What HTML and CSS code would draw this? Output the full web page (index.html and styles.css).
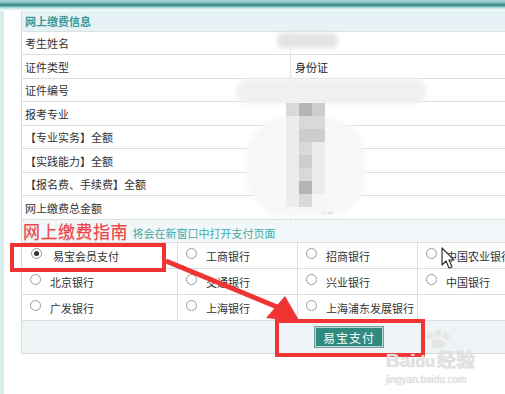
FILE: index.html
```html
<!doctype html>
<html lang="zh-CN">
  <head>
    <meta charset="UTF-8" />
    <title>网上缴费</title>
    <link rel="stylesheet" href="styles.css">
  </head>
  <body>
    <div class="topbar"></div>

    <div class="page">
      <div class="panel">
        <div class="panel-title">网上缴费信息</div>

        <div class="info">
          <div class="row"><span class="label">考生姓名</span><span class="value"></span></div>
          <div class="row"><span class="label">证件类型</span><span class="value">身份证</span></div>
          <div class="row"><span class="label">证件编号</span><span class="value"></span></div>
          <div class="row"><span class="label">报考专业</span><span class="value"></span></div>
          <div class="row"><span class="label">【专业实务】全额</span><span class="value"></span></div>
          <div class="row"><span class="label">【实践能力】全额</span><span class="value"></span></div>
          <div class="row"><span class="label">【报名费、手续费】全额</span><span class="value"></span></div>
          <div class="row"><span class="label">网上缴费总金额</span><span class="value yuan">元</span></div>
        </div>

        <div class="guide">
          <span class="guide-title">网上缴费指南</span>
          <span class="guide-note">将会在新窗口中打开支付页面</span>
        </div>

        <div class="banks">
          <label class="bank"><span class="radio checked"></span>易宝会员支付</label>
          <label class="bank"><span class="radio"></span>工商银行</label>
          <label class="bank"><span class="radio"></span>招商银行</label>
          <label class="bank"><span class="radio"></span>中国农业银行</label>
          <label class="bank"><span class="radio"></span>北京银行</label>
          <label class="bank"><span class="radio"></span>交通银行</label>
          <label class="bank"><span class="radio"></span>兴业银行</label>
          <label class="bank"><span class="radio"></span>中国银行</label>
          <label class="bank"><span class="radio"></span>广发银行</label>
          <label class="bank"><span class="radio"></span>上海银行</label>
          <label class="bank"><span class="radio"></span>上海浦东发展银行</label>
          <label class="bank empty"></label>
        </div>

        <div class="actions">
          <button class="pay-btn">易宝支付</button>
        </div>
      </div>
    </div>

    <!-- privacy blur over personal data -->
    <div class="blur blur-name"></div>
    <div class="blur blur-id"></div>
    <div class="blur blur-money"></div>
    <div class="pixels">
      <i class="g2"></i><i class="g4"></i><i class="g3"></i>
      <i class="g1"></i><i class="g2"></i><i class="g2"></i>
      <i class="g1"></i><i class="g3"></i><i class="g3"></i>
      <i class="g1"></i><i class="g2"></i><i class="g1"></i>
      <i class="g1"></i><i class="g3"></i><i class="g1"></i>
      <i class="g1"></i><i class="g2"></i><i class="g1"></i>
      <i class="g1"></i><i class="g4"></i><i class="g1"></i>
      <i class="g1"></i><i class="g2"></i><i class="g0"></i>
    </div>

    <!-- annotations -->
    <div class="mark mark-member"></div>
    <div class="mark mark-pay"></div>
    <svg class="arrow" width="505" height="394" viewBox="0 0 505 394">
      <line x1="166" y1="261" x2="282" y2="309" stroke="#f03434" stroke-width="5" />
      <polygon points="300,322 266,318 285,296" fill="#f03434" />
    </svg>
    <svg class="cursor" width="16" height="24" viewBox="0 0 16 24">
      <path d="M1 1 L1 18 L5 14 L8 21 L11 20 L8 13 L13 13 Z" fill="#fff" stroke="#333" stroke-width="1.2" stroke-linejoin="round" />
    </svg>

    <div class="watermark">
      <svg class="paw" width="40" height="20" viewBox="0 0 40 20">
        <circle cx="14" cy="6" r="3.5" />
        <circle cx="22" cy="3.5" r="3.5" />
        <circle cx="30" cy="6" r="3.5" />
        <ellipse cx="22" cy="14" rx="7" ry="5" />
      </svg>
      <div class="wm-logo">Bai<span class="du">du</span>经验</div>
      <div class="wm-url">jingyan.baidu.com</div>
    </div>
  </body>
</html>
```

FILE: styles.css
```css
/* Base */
body {
  margin: 0;
  width: 505px;
  height: 394px;
  overflow: hidden;
  background: #ffffff;
  font-family: "Noto Sans CJK SC", "Noto Sans", sans-serif;
  font-size: 11px;
  color: #333333;
  position: relative;
}

/* Teal band along the top */
.topbar {
  height: 11px;
  background: linear-gradient(
    to bottom,
    #a9d6d8 0,
    #7fbcbe 3px,
    #3f8e90 4px,
    #3f8e90 6px,
    #9fd0d2 7px,
    #dceff0 9px,
    #ffffff 11px
  );
}

/* Page area with light left strip */
.page {
  padding-left: 17px;
  border-left: 4px solid #d7ecec;
  height: 383px;
  box-sizing: border-box;
}

.panel {
  width: 540px;
  border: 1px solid #d2dde0;
  border-top: none;
  background: #ffffff;
}

.panel-title {
  height: 20px;
  line-height: 20px;
  padding-left: 3px;
  background: #e6f2f5;
  color: #3d9a98;
  font-weight: bold;
  border-bottom: 1px solid #d8e2e4;
}

/* Info rows */
.row {
  display: flex;
  height: 23px;
  line-height: 23px;
  border-bottom: 1px solid #dddddd;
  box-sizing: border-box;
}

.row:nth-child(even) {
  height: 24px;
  line-height: 24px;
}

.label {
  width: 268px;
  padding-left: 3px;
  box-sizing: border-box;
}

.value {
  flex: 1;
  padding-left: 4px;
  border-left: 1px solid #e4e4e4;
  color: #222222;
}

.yuan {
  padding-left: 31px;
  font-weight: bold;
}

/* Payment guide heading */
.guide {
  height: 22px;
  line-height: 22px;
  background: #f2f8f9;
  border-bottom: 1px solid #dddddd;
  padding-left: 1px;
  white-space: nowrap;
}

.guide-title {
  color: #e9474a;
  font-size: 17px;
  letter-spacing: 0.5px;
  text-shadow: 0 1px 0 #f7b3b5;
}

.guide-note {
  color: #45a8a4;
  font-size: 11px;
  margin-left: 2px;
}

/* Bank grid */
.banks {
  display: grid;
  grid-template-columns: 156px 120px 120px 120px;
  grid-auto-rows: 26px;
}

.bank {
  display: flex;
  align-items: center;
  border-right: 1px solid #dddddd;
  border-bottom: 1px solid #dddddd;
  box-sizing: border-box;
  padding-left: 8px;
  font-size: 11px;
  color: #333333;
  white-space: nowrap;
}

.radio {
  flex: none;
  width: 9px;
  height: 9px;
  border: 1px solid #9a9a9a;
  border-radius: 50%;
  margin-right: 9px;
  position: relative;
  top: -2px;
  background: #ffffff;
}

.radio.checked::after {
  content: "";
  position: absolute;
  left: 2px;
  top: 2px;
  width: 5px;
  height: 5px;
  border-radius: 50%;
  background: #333333;
}

.bank:first-child {
  padding-left: 9px;
}

.bank:first-child .radio {
  margin-right: 11px;
}

/* Submit row */
.actions {
  height: 32px;
  background: #eef3f6;
  display: flex;
  align-items: center;
  padding-left: 293px;
}

.pay-btn {
  width: 68px;
  height: 20px;
  padding: 0;
  background: #2f8a7f;
  color: #ffffff;
  font-family: "Noto Sans CJK SC", sans-serif;
  font-size: 12px;
  letter-spacing: 1px;
  border: 1px solid #b9d8d3;
  outline: 1px solid #7c9c98;
  cursor: pointer;
}

/* Privacy blurs */
.blur {
  position: absolute;
  border-radius: 6px;
  filter: blur(2px);
}

.blur-name {
  left: 277px;
  top: 33px;
  width: 61px;
  height: 15px;
  background: #e4e4e4;
}

.blur-id {
  left: 236px;
  top: 79px;
  width: 190px;
  height: 25px;
  background: #f0f0f0;
  border-radius: 14px;
}

.blur-money {
  left: 246px;
  top: 118px;
  width: 120px;
  height: 98px;
  background: #f7f7f7;
  border-radius: 40px;
}

.pixels {
  position: absolute;
  left: 286px;
  top: 103px;
  display: grid;
  grid-template-columns: repeat(3, 13px);
  grid-auto-rows: 13px;
  filter: blur(0.6px);
}

.pixels i {
  display: block;
}

.g0 { background: #f6f6f6; }
.g1 { background: #ececec; }
.g2 { background: #d9d9d9; }
.g3 { background: #cdcdcd; }
.g4 { background: #b5b5b5; }

/* Red annotation frames */
.mark {
  position: absolute;
  border: 4px solid #f03434;
  box-sizing: border-box;
}

.mark-member {
  left: 10px;
  top: 243px;
  width: 156px;
  height: 29px;
}

.mark-pay {
  left: 275px;
  top: 319px;
  width: 150px;
  height: 38px;
}

.arrow {
  position: absolute;
  left: 0;
  top: 0;
}

.cursor {
  position: absolute;
  left: 441px;
  top: 247px;
}

/* Watermark */
.watermark {
  position: absolute;
  left: 386px;
  top: 330px;
  width: 115px;
  color: #e2e2e2;
  font-family: "Liberation Sans", sans-serif;
  text-shadow: 0 0 1px #cfcfcf;
}

.paw {
  display: block;
  margin-left: 30px;
  fill: #e6e6e6;
}

.wm-logo {
  font-size: 19px;
  font-weight: bold;
  line-height: 22px;
  white-space: nowrap;
}

.wm-logo .du {
  font-size: 16px;
  margin-right: 2px;
}

.wm-url {
  font-size: 10px;
  line-height: 13px;
}
```
